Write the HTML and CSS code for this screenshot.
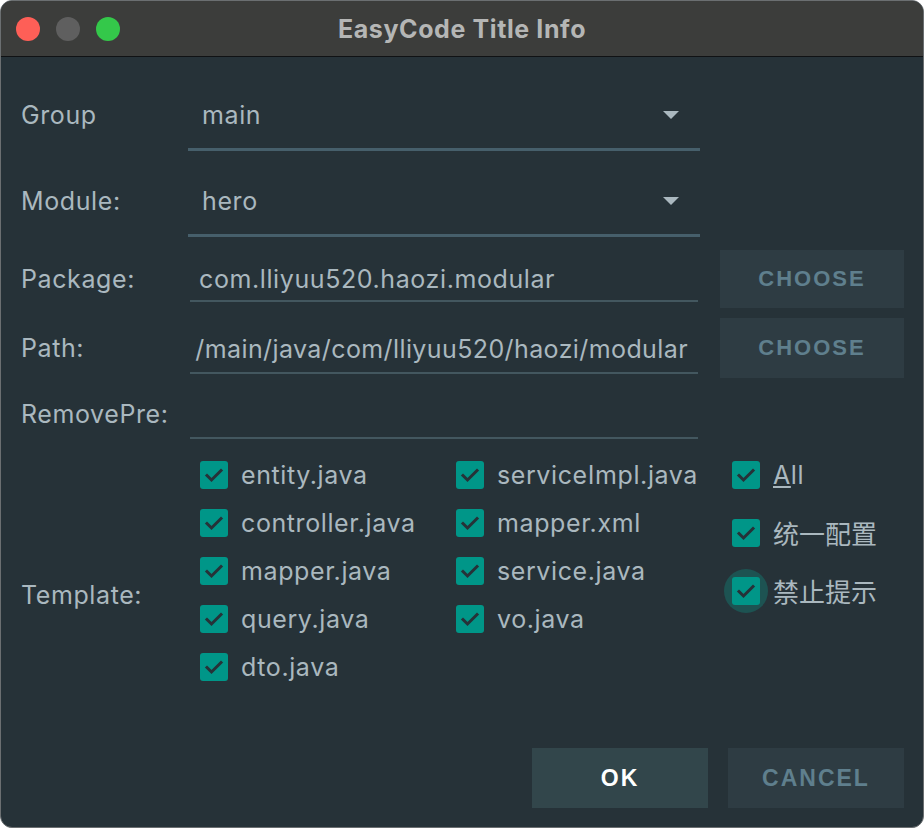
FILE: index.html
```html
<!DOCTYPE html>
<html>
<head>
<meta charset="utf-8">
<link rel="stylesheet" href="styles.css">
</head>
<body>
<div class="window">
  <div class="titlebar">
    <div class="lights">
      <span class="light red"></span>
      <span class="light gray"></span>
      <span class="light green"></span>
    </div>
    <div class="title">EasyCode Title Info</div>
    <div></div>
  </div>
  <div class="content">
    <div class="row row-group">
      <div class="label">Group</div>
      <div class="dropdown"><span>main</span><span class="arrow"></span></div>
    </div>
    <div class="row row-module">
      <div class="label">Module:</div>
      <div class="dropdown"><span>hero</span><span class="arrow"></span></div>
    </div>
    <div class="row row-package">
      <div class="label">Package:</div>
      <div class="field"><span class="field-text">com.lliyuu520.haozi.modular</span></div>
      <button class="btn btn-muted">CHOOSE</button>
    </div>
    <div class="row row-path">
      <div class="label">Path:</div>
      <div class="field field-scrolled"><span class="field-text">/main/java/com/lliyuu520/haozi/modular</span></div>
      <button class="btn btn-muted">CHOOSE</button>
    </div>
    <div class="row row-remove">
      <div class="label">RemovePre:</div>
      <div class="field field-empty"></div>
    </div>
    <div class="row row-template">
      <div class="label label-template">Template:</div>
      <div class="checks">
        <div class="check-grid">
          <label class="cb"><span class="box"><svg viewBox="0 0 28 28"><path d="M7 14.5 L11.5 19 L21 9.5"/></svg></span>entity.java</label>
          <label class="cb"><span class="box"><svg viewBox="0 0 28 28"><path d="M7 14.5 L11.5 19 L21 9.5"/></svg></span>serviceImpl.java</label>
          <label class="cb"><span class="box"><svg viewBox="0 0 28 28"><path d="M7 14.5 L11.5 19 L21 9.5"/></svg></span>controller.java</label>
          <label class="cb"><span class="box"><svg viewBox="0 0 28 28"><path d="M7 14.5 L11.5 19 L21 9.5"/></svg></span>mapper.xml</label>
          <label class="cb"><span class="box"><svg viewBox="0 0 28 28"><path d="M7 14.5 L11.5 19 L21 9.5"/></svg></span>mapper.java</label>
          <label class="cb"><span class="box"><svg viewBox="0 0 28 28"><path d="M7 14.5 L11.5 19 L21 9.5"/></svg></span>service.java</label>
          <label class="cb"><span class="box"><svg viewBox="0 0 28 28"><path d="M7 14.5 L11.5 19 L21 9.5"/></svg></span>query.java</label>
          <label class="cb"><span class="box"><svg viewBox="0 0 28 28"><path d="M7 14.5 L11.5 19 L21 9.5"/></svg></span>vo.java</label>
          <label class="cb"><span class="box"><svg viewBox="0 0 28 28"><path d="M7 14.5 L11.5 19 L21 9.5"/></svg></span>dto.java</label>
        </div>
        <div class="check-side">
          <label class="cb"><span class="box"><svg viewBox="0 0 28 28"><path d="M7 14.5 L11.5 19 L21 9.5"/></svg></span><span><u>A</u>ll</span></label>
          <label class="cb cjk"><span class="box"><svg viewBox="0 0 28 28"><path d="M7 14.5 L11.5 19 L21 9.5"/></svg></span>统一配置</label>
          <label class="cb cjk"><span class="box focused"><svg viewBox="0 0 28 28"><path d="M7 14.5 L11.5 19 L21 9.5"/></svg></span>禁止提示</label>
        </div>
      </div>
    </div>
    <div class="actions">
      <button class="btn btn-ok">OK</button>
      <button class="btn btn-muted">CANCEL</button>
    </div>
  </div>
</div>
</body>
</html>
```
FILE: styles.css
```css
html, body {
  margin: 0;
  padding: 0;
  background: #ffffff;
}
.window {
  width: 924px;
  height: 828px;
  box-sizing: border-box;
  border: 1px solid #6b6f71;
  border-radius: 12px;
  overflow: hidden;
  background: #263238;
  display: flex;
  flex-direction: column;
  font-family: Inter, "Noto Sans", sans-serif;
  color: #aab8bf;
}
.titlebar {
  height: 55px;
  background: #3c3d3b;
  border-bottom: 1px solid #101214;
  display: grid;
  grid-template-columns: 1fr auto 1fr;
  align-items: center;
}
.lights {
  display: flex;
  gap: 16px;
  padding-left: 15px;
}
.light {
  width: 24px;
  height: 24px;
  border-radius: 50%;
  display: block;
}
.red { background: #fe5f57; }
.gray { background: #5f5f5f; }
.green { background: #34c84a; }
.title {
  font-family: Inter, "Liberation Sans", sans-serif;
  font-weight: 700;
  font-size: 25px;
  letter-spacing: 0.6px;
  color: #b5b6b5;
}
.content {
  flex: 1;
  display: flex;
  flex-direction: column;
  padding: 22px 19px 19px 20px;
}
.row {
  display: grid;
  grid-template-columns: 167px 512px 204px;
  align-items: center;
}
.label {
  font-size: 25px;
  letter-spacing: 0.6px;
  line-height: 28px;
}
.row-group { height: 72px; }
.row-module { height: 72px; margin-top: 14px; }
.row-package { height: 58px; margin-top: 13px; }
.row-path { height: 60px; margin-top: 10px; }
.row-remove { height: 51px; margin-top: 10px; }
.row-template { margin-top: 22px; align-items: start; }
.dropdown {
  height: 72px;
  box-sizing: border-box;
  border-bottom: 3px solid #465f6b;
  padding: 3px 21px 0 14px;
  display: flex;
  align-items: center;
  justify-content: space-between;
  font-size: 25px;
  letter-spacing: 0.6px;
}
.arrow {
  width: 0;
  height: 0;
  border-left: 8.5px solid transparent;
  border-right: 8.5px solid transparent;
  border-top: 8px solid #aab8bf;
}
.field {
  margin-left: 2px;
  margin-right: 2px;
  box-sizing: border-box;
  border-bottom: 2px solid #43575f;
  padding: 8px 10px 0 9px;
  display: flex;
  align-items: center;
  font-size: 25px;
  letter-spacing: 0.6px;
  overflow: hidden;
  white-space: nowrap;
}
.row-package .field { height: 52px; align-self: start; }
.row-path .field { height: 56px; align-self: start; }
.field-scrolled { justify-content: flex-end; padding-left: 4px; }
.field-scrolled .field-text { letter-spacing: 0.4px; }
.field-empty { height: 51px; padding: 0; }
.btn {
  margin-left: 20px;
  width: 184px;
  border: none;
  font-family: "Liberation Sans", Arial, sans-serif;
  font-weight: 700;
  font-size: 22px;
  letter-spacing: 2px;
  padding: 0;
}
.row .btn { height: 58px; align-self: start; }
.row-path .btn { height: 60px; }
.btn-muted {
  background: #2e3c43;
  color: #5f7f8d;
}
.btn-ok {
  background: #32464b;
  color: #ffffff;
}
.label-template { margin-top: 120px; }
.checks {
  grid-column: 2 / 4;
  display: flex;
  padding-left: 12px;
}
.check-grid {
  display: grid;
  grid-template-columns: 256px 276px;
  grid-auto-rows: 28px;
  row-gap: 20px;
}
.check-side {
  display: flex;
  flex-direction: column;
  gap: 30px;
}
.cb {
  display: flex;
  align-items: center;
  gap: 13px;
  font-size: 25px;
  letter-spacing: 0.6px;
  line-height: 28px;
  white-space: nowrap;
}
.cjk {
  font-family: "Noto Sans CJK SC", sans-serif;
  font-size: 26px;
  letter-spacing: 0;
}
.box {
  position: relative;
  width: 28px;
  height: 28px;
  border-radius: 3px;
  background: #009688;
  flex-shrink: 0;
}
.box svg {
  position: relative;
  display: block;
  width: 28px;
  height: 28px;
  fill: none;
  stroke: #263238;
  stroke-width: 3;
  stroke-linecap: square;
}
.focused::before {
  content: "";
  position: absolute;
  left: -8px;
  top: -8px;
  width: 44px;
  height: 44px;
  border-radius: 50%;
  background: #1d5352;
}
.focused {
  background: transparent;
}
.focused::after {
  content: "";
  position: absolute;
  inset: 0;
  border-radius: 3px;
  background: #009688;
}
.focused svg { z-index: 1; }
.actions {
  margin-top: auto;
  display: flex;
  justify-content: flex-end;
}
.actions .btn {
  height: 60px;
  width: 176px;
  font-size: 23px;
}
```
